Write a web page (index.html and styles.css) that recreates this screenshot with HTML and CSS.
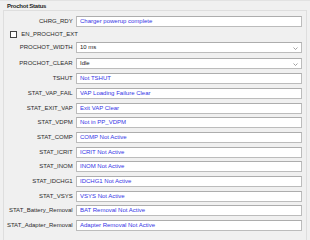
FILE: index.html
```html
<!DOCTYPE html>
<html>
<head>
<meta charset="utf-8">
<link rel="stylesheet" href="styles.css">
</head>
<body>
<div class="panel">
  <div class="title">Prochot Status</div>
  <div class="frame">
    <div class="rows">
      <div class="row"><span class="label">CHRG_RDY</span><span class="box val">Charger powerup complete</span></div>
      <div class="row check-row"><span class="check"></span><span class="check-label">EN_PROCHOT_EXT</span></div>
      <div class="row sel-row1"><span class="label">PROCHOT_WIDTH</span><span class="box sel">10 ms<svg class="chev" width="5" height="3" viewBox="0 0 5 3"><polyline points="0.5,0.5 2.5,2.5 4.5,0.5" fill="none" stroke="#8a8a8a" stroke-width="0.8"/></svg></span></div>
      <div class="row sel-row2"><span class="label">PROCHOT_CLEAR</span><span class="box sel">Idle<svg class="chev" width="5" height="3" viewBox="0 0 5 3"><polyline points="0.5,0.5 2.5,2.5 4.5,0.5" fill="none" stroke="#8a8a8a" stroke-width="0.8"/></svg></span></div>
      <div class="row"><span class="label">TSHUT</span><span class="box val">Not TSHUT</span></div>
      <div class="row"><span class="label">STAT_VAP_FAIL</span><span class="box val">VAP Loading Failure Clear</span></div>
      <div class="row"><span class="label">STAT_EXIT_VAP</span><span class="box val">Exit VAP Clear</span></div>
      <div class="row"><span class="label">STAT_VDPM</span><span class="box val">Not in PP_VDPM</span></div>
      <div class="row"><span class="label">STAT_COMP</span><span class="box val">COMP Not Active</span></div>
      <div class="row"><span class="label">STAT_ICRIT</span><span class="box val">ICRIT Not Active</span></div>
      <div class="row"><span class="label">STAT_INOM</span><span class="box val">INOM Not Active</span></div>
      <div class="row"><span class="label">STAT_IDCHG1</span><span class="box val">IDCHG1 Not Active</span></div>
      <div class="row"><span class="label">STAT_VSYS</span><span class="box val">VSYS Not Active</span></div>
      <div class="row"><span class="label">STAT_Battery_Removal</span><span class="box val">BAT Removal Not Active</span></div>
      <div class="row"><span class="label">STAT_Adapter_Removal</span><span class="box val">Adapter Removal Not Active</span></div>
    </div>
  </div>
</div>
</body>
</html>
```
FILE: styles.css
```css
html, body {
  margin: 0;
  padding: 0;
  background: #f0f0f0;
}
body {
  font-family: "Liberation Sans", Arial, sans-serif;
  font-size: 6px;
  color: #2b2b2b;
}
.panel {
  width: 310px;
  height: 240px;
  box-sizing: border-box;
  border-top: 1px solid #e2e2e2;
  overflow: hidden;
}
.title {
  font-weight: bold;
  font-size: 6px;
  letter-spacing: -0.25px;
  padding-left: 7px;
  height: 9px;
  line-height: 11px;
  color: #1e1e1e;
}
.frame {
  margin: 0 3px 0 3px;
  border: 1px solid #dedede;
  border-bottom: none;
  height: 240px;
  box-sizing: border-box;
  padding-top: 4.7px;
}
.rows {
  display: flex;
  flex-direction: column;
  gap: 3.67px;
}
.row {
  display: grid;
  grid-template-columns: 68.7px 226px;
  column-gap: 3.3px;
  height: 11px;
  align-items: center;
}
.label {
  text-align: right;
  white-space: nowrap;
  line-height: 11px;
}
.box {
  box-sizing: border-box;
  height: 11px;
  border: 1px solid #bcbcbc;
  border-top-color: #adadad;
  background: #ffffff;
  padding-left: 3px;
  line-height: 9px;
  white-space: nowrap;
  position: relative;
}
.val {
  color: #3434e6;
}
.sel {
  color: #202020;
}
.chev {
  position: absolute;
  right: 3px;
  top: 3.5px;
}
.check-row {
  display: flex;
  height: 8.3px;
  padding-left: 6px;
  align-items: center;
}
.check {
  width: 7px;
  height: 7px;
  box-sizing: border-box;
  border: 1px solid #444;
  background: #fff;
  margin-right: 1px;
}
.check-label {
  line-height: 8px;
}
.sel-row1 {
  margin-bottom: 1.33px;
}
.sel-row2 {
  margin-bottom: 0.33px;
}
```
